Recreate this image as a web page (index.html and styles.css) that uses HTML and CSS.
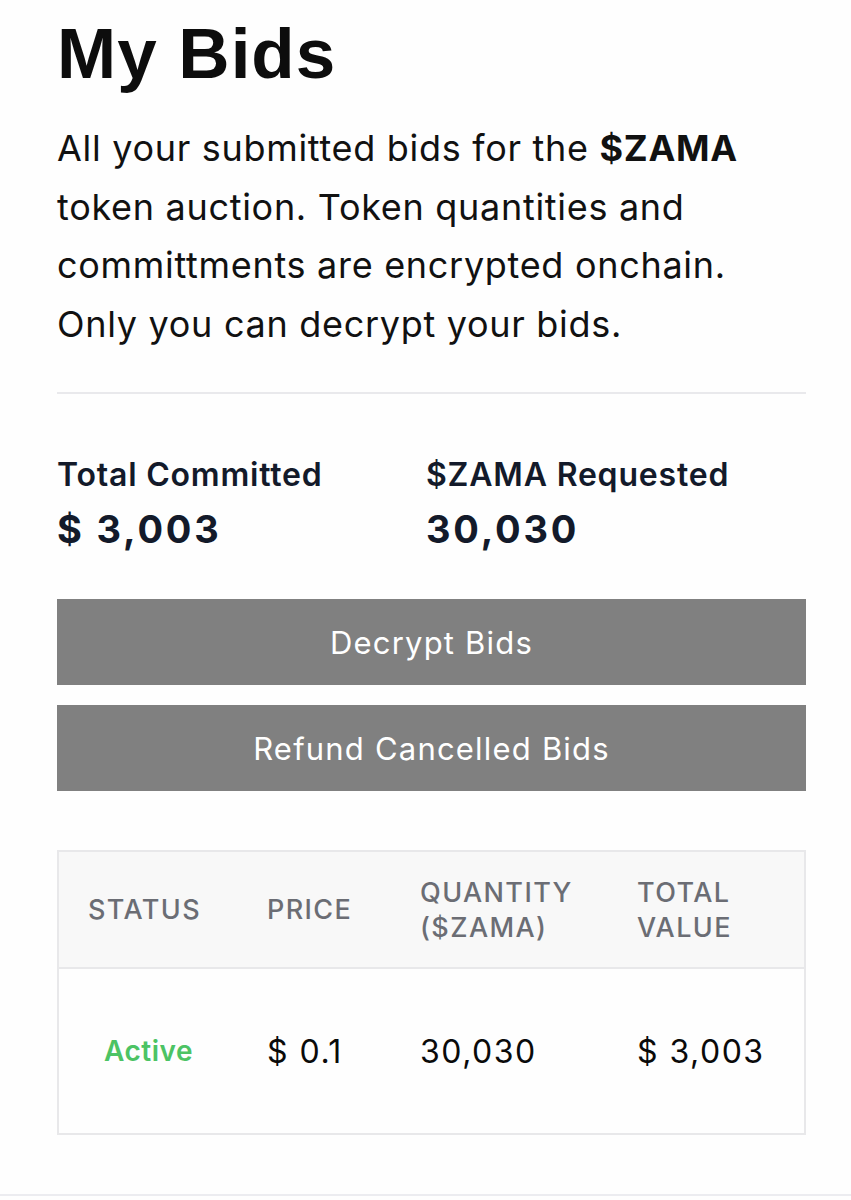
FILE: index.html
```html
<!DOCTYPE html>
<html>

<head>
    <title>My Bids</title>
    <link rel="stylesheet" href="styles.css">
</head>

<body>
    <div class="page">
        <h1 class="title">My Bids</h1>
        <p class="intro">All your submitted bids for the <b>$ZAMA</b> token auction. Token quantities and
            committments are encrypted onchain. Only you can decrypt your bids.</p>

        <hr class="divider">

        <div class="stats">
            <div class="stat">
                <div class="stat-label">Total Committed</div>
                <div class="stat-value">$ 3,003</div>
            </div>
            <div class="stat">
                <div class="stat-label">$ZAMA Requested</div>
                <div class="stat-value">30,030</div>
            </div>
        </div>

        <button class="action" type="button">Decrypt Bids</button>
        <button class="action" type="button">Refund Cancelled Bids</button>

        <table class="bids">
            <colgroup>
                <col class="col-status">
                <col class="col-price">
                <col class="col-qty">
                <col>
            </colgroup>
            <thead>
                <tr>
                    <th>Status</th>
                    <th>Price</th>
                    <th>Quantity<br>($ZAMA)</th>
                    <th>Total<br>Value</th>
                </tr>
            </thead>
            <tbody>
                <tr>
                    <td class="status-active">Active</td>
                    <td>$ 0.1</td>
                    <td>30,030</td>
                    <td>$ 3,003</td>
                </tr>
            </tbody>
        </table>
    </div>
    <div class="page-end"></div>
</body>

</html>
```

FILE: styles.css
```css
* {
    margin: 0;
    padding: 0;
    box-sizing: border-box;
}

body {
    background: #fefefe;
    font-family: Inter, 'Liberation Sans', sans-serif;
    color: #111111;
}

.page {
    padding: 18px 45px 0 57px;
}

.title {
    font-family: 'Liberation Sans', Arial, sans-serif;
    font-size: 71px;
    line-height: 71px;
    font-weight: 700;
    letter-spacing: 1px;
    color: #0d0d0d;
}

.intro {
    margin-top: 30px;
    font-size: 36px;
    line-height: 58.5px;
    font-weight: 400;
    letter-spacing: 0.7px;
}

.intro b {
    font-weight: 700;
}

.divider {
    border: none;
    height: 2px;
    background: #e9e9ec;
    margin-top: 39px;
}

.stats {
    display: flex;
    margin-top: 63px;
    color: #131a2a;
}

.stat {
    width: 369px;
}

.stat-label {
    font-size: 32px;
    line-height: 36px;
    font-weight: 600;
    letter-spacing: 0.8px;
}

.stat-value {
    margin-top: 14px;
    font-size: 38px;
    line-height: 44px;
    font-weight: 700;
    letter-spacing: 2.8px;
}

.action {
    display: block;
    width: 100%;
    height: 86px;
    border: none;
    outline: none;
    background: #808080;
    color: #ffffff;
    font-family: Inter, 'Liberation Sans', sans-serif;
    font-size: 31px;
    font-weight: 400;
    letter-spacing: 1.2px;
    margin-top: 48px;
}

.action + .action {
    margin-top: 20px;
}

.bids {
    width: 100%;
    margin-top: 59px;
    border-collapse: collapse;
    table-layout: fixed;
    border: 2px solid #e8e8ea;
}

.col-status {
    width: 180px;
}

.col-price {
    width: 153px;
}

.col-qty {
    width: 217px;
}

.bids th {
    height: 117px;
    background: #f8f8f8;
    border-bottom: 2px solid #e8e8ea;
    text-align: left;
    padding-left: 29px;
    font-size: 27px;
    line-height: 35px;
    font-weight: 500;
    letter-spacing: 1.4px;
    color: #6b6d74;
    text-transform: uppercase;
}

.bids td {
    height: 166px;
    padding-left: 29px;
    font-size: 32px;
    font-weight: 400;
    letter-spacing: 1.5px;
    color: #0a0a0a;
}

.bids td.status-active {
    padding-left: 0;
    text-align: center;
    font-size: 28px;
    font-weight: 600;
    letter-spacing: 0.5px;
    color: #4cc364;
}

.page-end {
    margin-top: 59px;
    border-top: 2px solid #ececf0;
    height: 10px;
}
```
